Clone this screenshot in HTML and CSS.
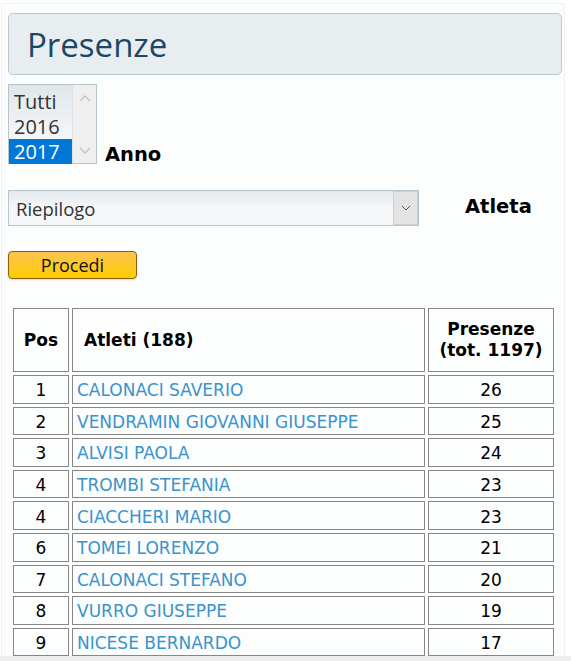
FILE: index.html
```html
<!DOCTYPE html>
<html lang="it">
<head>
<meta charset="utf-8">
<title>Presenze</title>
<link rel="stylesheet" href="styles.css">
</head>
<body>
<div class="frame">
  <div class="page">
    <div class="title-box"><h1 class="title">Presenze</h1></div>

    <div class="field-row field-anno">
      <div class="listbox">
        <ul class="list-items">
          <li class="opt">Tutti</li>
          <li class="opt">2016</li>
          <li class="opt opt-sel">2017</li>
        </ul>
        <div class="lb-scroll">
          <svg class="arrow" width="12" height="8" viewBox="0 0 12 8"><path d="M1 7 L6 2 L11 7" fill="none" stroke="#c4c4c4" stroke-width="1.4"/></svg>
          <svg class="arrow" width="12" height="8" viewBox="0 0 12 8"><path d="M1 1 L6 6 L11 1" fill="none" stroke="#c4c4c4" stroke-width="1.4"/></svg>
        </div>
      </div>
      <span class="label">Anno</span>
    </div>

    <div class="field-row field-atleta">
      <div class="select">
        <span class="select-text">Riepilogo</span>
        <span class="select-btn">
          <svg width="10" height="6" viewBox="0 0 10 6"><path d="M1 1 L5 5 L9 1" fill="none" stroke="#555" stroke-width="1"/></svg>
        </span>
      </div>
      <span class="label">Atleta</span>
    </div>

    <div class="btn-row"><button class="btn">Procedi</button></div>

    <table class="grid">
      <thead>
        <tr>
          <th class="c-pos">Pos</th>
          <th class="c-name">Atleti (188)</th>
          <th class="c-num">Presenze<br>(tot. 1197)</th>
        </tr>
      </thead>
      <tbody>
        <tr><td class="c-pos">1</td><td class="c-name"><a href="#">CALONACI SAVERIO</a></td><td class="c-num">26</td></tr>
        <tr><td class="c-pos">2</td><td class="c-name"><a href="#">VENDRAMIN GIOVANNI GIUSEPPE</a></td><td class="c-num">25</td></tr>
        <tr><td class="c-pos">3</td><td class="c-name"><a href="#">ALVISI PAOLA</a></td><td class="c-num">24</td></tr>
        <tr><td class="c-pos">4</td><td class="c-name"><a href="#">TROMBI STEFANIA</a></td><td class="c-num">23</td></tr>
        <tr><td class="c-pos">4</td><td class="c-name"><a href="#">CIACCHERI MARIO</a></td><td class="c-num">23</td></tr>
        <tr><td class="c-pos">6</td><td class="c-name"><a href="#">TOMEI LORENZO</a></td><td class="c-num">21</td></tr>
        <tr><td class="c-pos">7</td><td class="c-name"><a href="#">CALONACI STEFANO</a></td><td class="c-num">20</td></tr>
        <tr><td class="c-pos">8</td><td class="c-name"><a href="#">VURRO GIUSEPPE</a></td><td class="c-num">19</td></tr>
        <tr><td class="c-pos">9</td><td class="c-name"><a href="#">NICESE BERNARDO</a></td><td class="c-num">17</td></tr>
      </tbody>
    </table>
  </div>
</div>
<div class="bottom-bar"></div>
</body>
</html>
```
FILE: styles.css
```css
html, body {
  margin: 0;
  padding: 0;
  height: 661px;
  overflow: hidden;
  background: #ffffff;
}
body {
  font-family: "DejaVu Sans", sans-serif;
  color: #000;
  position: relative;
}
.frame {
  margin: 3px 6px 0 1px;
  border-top: 1px solid #eef2f1;
  border-left: 1px solid #eef2f1;
  border-right: 1px solid #eef2f1;
  background: #fcfdfd;
  height: 660px;
  box-sizing: border-box;
}
.page {
  padding: 9px 0 0 6px;
  width: 554px;
}
.title-box {
  background: #e8edf0;
  border: 1px solid #b9c8d0;
  border-radius: 5px;
  height: 60px;
  display: flex;
  align-items: center;
  padding-left: 18px;
}
.title {
  margin: 0;
  font-family: "Open Sans", "Noto Sans", sans-serif;
  font-weight: 400;
  font-size: 33px;
  color: #1b4766;
  line-height: 1;
}
.field-row {
  display: flex;
  align-items: flex-end;
}
.field-anno {
  margin-top: 9px;
}
.listbox {
  width: 87px;
  height: 78px;
  border: 1px solid #b6c6ce;
  display: flex;
  background: linear-gradient(#dfe6ea, #f3f5f7 60%);
}
.list-items {
  list-style: none;
  margin: 0;
  padding: 4px 0 0 0;
  width: 64px;
  font-family: "Open Sans", "Noto Sans", sans-serif;
  font-size: 20px;
  color: #333;
}
.opt {
  height: 25px;
  line-height: 25px;
  padding-left: 5px;
}
.opt-sel {
  background: #0078d7;
  color: #fff;
}
.lb-scroll {
  width: 23px;
  background: #efefef;
  border-left: 1px solid #e2e2e2;
  display: flex;
  flex-direction: column;
  justify-content: space-between;
  align-items: center;
  padding: 9px 0 8px;
}
.arrow { display: block; }
.label {
  font-family: "DejaVu Sans", sans-serif;
  font-weight: bold;
  font-size: 19.5px;
  margin-left: 8px;
  line-height: 20px;
  position: relative;
  top: 1px;
}
.field-atleta {
  margin-top: 26px;
  align-items: center;
}
.select {
  width: 409px;
  height: 34px;
  border: 1px solid #b6c6ce;
  background: linear-gradient(#e3e9ed, #f4f6f8 45%);
  display: flex;
  align-items: center;
  justify-content: space-between;
}
.select-text {
  font-family: "Open Sans", "Noto Sans", sans-serif;
  font-size: 18.5px;
  color: #333;
  padding-left: 7px;
}
.select-btn {
  width: 23px;
  height: 32px;
  border: 1px solid #cfcfcf;
  background: #e3e3e3;
  display: flex;
  align-items: center;
  justify-content: center;
}
.field-atleta .label {
  margin-left: 46px;
  top: -1px;
}
.btn-row {
  margin-top: 25px;
}
.btn {
  width: 129px;
  height: 28px;
  border: 1px solid #8c5f10;
  border-radius: 4px;
  background: linear-gradient(#fcc451, #ffcc00);
  font-family: "Open Sans", "Noto Sans", sans-serif;
  font-size: 18px;
  color: #111;
  padding: 0;
  box-shadow: 0 1px 2px rgba(0,0,0,0.15);
  line-height: 24px;
}
.grid {
  margin-top: 26px;
  margin-left: 2px;
  border-collapse: separate;
  border-spacing: 3px;
  width: 547px;
  font-family: "DejaVu Sans", sans-serif;
  font-size: 17px;
}
.grid th, .grid td {
  border: 1px solid #868686;
  padding: 0;
}
.grid th {
  height: 62px;
  font-size: 17px;
  font-weight: bold;
  line-height: 21px;
}
.grid td {
  height: 24.6px;
  padding-top: 2px;
  line-height: 20px;
}
.c-pos { width: 54px; text-align: center; }
.grid .c-name { text-align: left; padding-left: 4px; }
.grid th.c-name { padding-left: 11px; }
.c-num { width: 124px; text-align: center; }
.grid a {
  color: #3a93cc;
  text-decoration: none;
}
.bottom-bar {
  position: absolute;
  left: 0;
  right: 0;
  top: 656px;
  height: 5px;
  background: #eeeeee;
}
```
